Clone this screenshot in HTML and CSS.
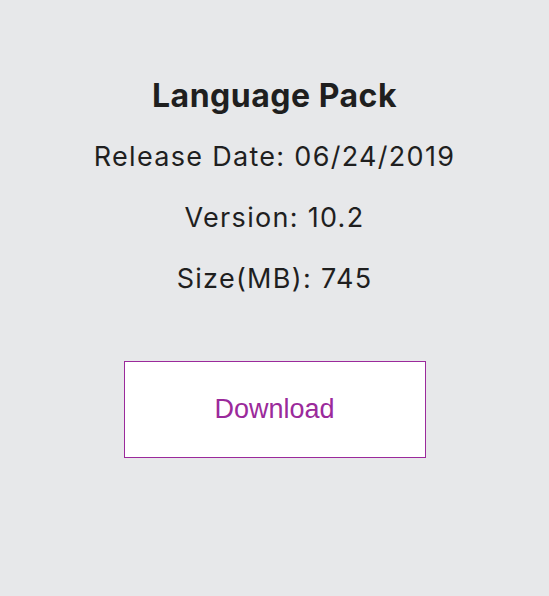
FILE: index.html
```html
<!DOCTYPE html>
<html>
<head>
<meta charset="utf-8">
<link rel="stylesheet" href="styles.css">
</head>
<body>
<main class="card">
  <h1 class="title">Language Pack</h1>
  <p class="info">Release Date: 06/24/2019</p>
  <p class="info">Version: 10.2</p>
  <p class="info">Size(MB): 745</p>
  <div class="actions">
    <a class="download" href="#">Download</a>
  </div>
</main>
</body>
</html>
```

FILE: styles.css
```css
html, body {
  margin: 0;
  padding: 0;
  background: #e7e8ea;
}
body {
  width: 549px;
  height: 596px;
}
.card {
  display: flex;
  flex-direction: column;
  align-items: center;
  padding-top: 76px;
  font-family: "Inter", "Liberation Sans", sans-serif;
  color: #1f1f1f;
}
.title {
  margin: 0 0 10px 0;
  font-size: 32px;
  line-height: 40px;
  font-weight: 700;
  letter-spacing: 0.5px;
}
.info {
  margin: 0;
  font-size: 27px;
  line-height: 61px;
  font-weight: 400;
  letter-spacing: 1.3px;
}
.actions {
  margin-top: 52px;
}
.download {
  display: flex;
  align-items: center;
  justify-content: center;
  width: 300px;
  height: 95px;
  background: #fff;
  border: 1px solid #9b2a9b;
  color: #9b2a9b;
  font-family: "Liberation Sans", Arial, sans-serif;
  font-size: 27px;
  text-decoration: none;
}
```
